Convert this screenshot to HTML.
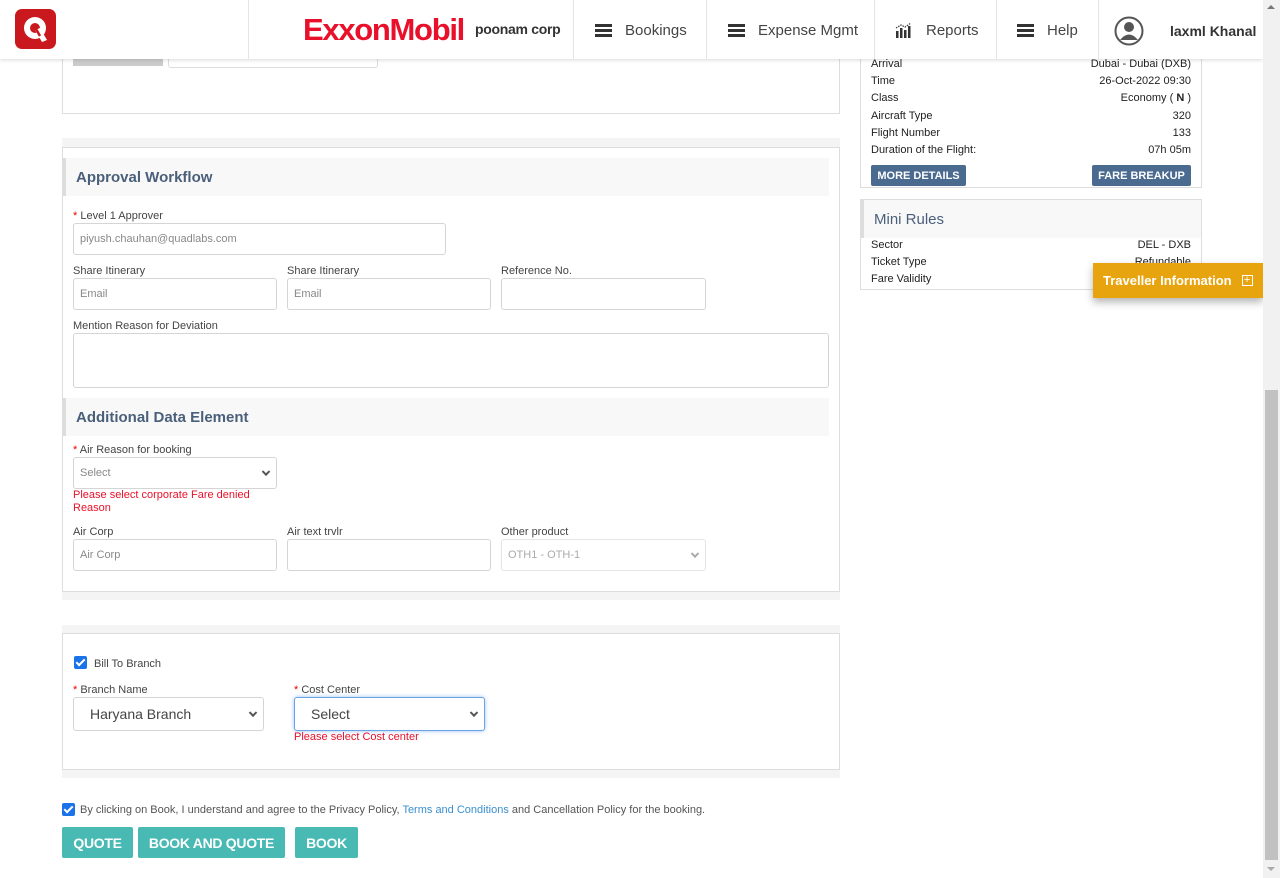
<!DOCTYPE html>
<html><head><meta charset="utf-8"><style>
*{box-sizing:border-box;margin:0;padding:0}
body{width:1280px;height:878px;overflow:hidden;background:#fff;font-family:"Liberation Sans",sans-serif;color:#333;position:relative}
.a{position:absolute}
.lbl{position:absolute;font-size:11px;color:#444}
.req{color:#e00}
.inp{position:absolute;border:1px solid #d5d5d5;border-radius:3px;background:#fff;font-size:11px;color:#888;padding-left:6px;display:flex;align-items:center}
.chev{position:absolute;right:7px;top:50%;width:6px;height:6px;border-right:2px solid #555;border-bottom:2px solid #555;transform:translateY(-70%) rotate(45deg)}
.sec{position:absolute;background:#f8f8f8;border-left:3px solid #ddd;font-size:15px;color:#4a5f7a;font-weight:bold;padding-left:10px;display:flex;align-items:center}
.err{position:absolute;font-size:11px;color:#e8102a;line-height:13px}
.band{position:absolute;left:62px;width:778px;background:#f4f4f4}
.card{position:absolute;left:62px;width:778px;border:1px solid #ddd;background:#fff}
.nav{position:absolute;top:0;height:59px;display:flex;align-items:center;font-size:15px;color:#444;border-left:1px solid #e5e5e5;padding-top:2px}
.ham{display:inline-block;width:17px;height:13px;margin-right:13px;background:linear-gradient(#333 0 3px,transparent 3px 5px,#333 5px 8px,transparent 8px 10px,#333 10px 13px)}
.btn{position:absolute;top:827px;height:31px;background:#48bab3;color:#fff;font-size:14px;font-weight:bold;display:flex;align-items:center;justify-content:center;border-radius:2px;letter-spacing:-0.3px}
.row{position:absolute;left:871px;width:320px;font-size:11px;color:#222;display:flex;justify-content:space-between}
.cb{position:absolute;width:13px;height:13px;background:#1a73e8;border-radius:2px}
.cb:after{content:"";position:absolute;left:4px;top:1px;width:3px;height:7px;border-right:2px solid #fff;border-bottom:2px solid #fff;transform:rotate(45deg)}
</style></head><body>

<div class="card" style="top:40px;height:74px"></div>
<div class="a" style="left:73px;top:55px;width:90px;height:11px;background:#ccc"></div>
<div class="a" style="left:168px;top:55px;width:210px;height:13px;border:1px solid #ddd;border-top:none;border-radius:0 0 3px 3px"></div>

<div class="band" style="top:138px;height:9px"></div>
<div class="card" style="top:147px;height:445px"></div>
<div class="sec" style="left:63px;top:158px;width:766px;height:38px">Approval Workflow</div>
<div class="lbl" style="left:73px;top:210px"><span class="req">* </span>Level 1 Approver</div>
<div class="inp" style="left:73px;top:223px;width:373px;height:32px">piyush.chauhan@quadlabs.com</div>
<div class="lbl" style="left:73px;top:265px">Share Itinerary</div>
<div class="lbl" style="left:287px;top:265px">Share Itinerary</div>
<div class="lbl" style="left:501px;top:265px">Reference No.</div>
<div class="inp" style="left:73px;top:278px;width:204px;height:32px">Email</div>
<div class="inp" style="left:287px;top:278px;width:204px;height:32px">Email</div>
<div class="inp" style="left:501px;top:278px;width:205px;height:32px"></div>
<div class="lbl" style="left:73px;top:320px">Mention Reason for Deviation</div>
<div class="inp" style="left:73px;top:333px;width:756px;height:55px"></div>

<div class="sec" style="left:63px;top:398px;width:766px;height:38px">Additional Data Element</div>
<div class="lbl" style="left:73px;top:444px"><span class="req">* </span>Air Reason for booking</div>
<div class="inp" style="left:73px;top:457px;width:204px;height:32px">Select<span class="chev"></span></div>
<div class="err" style="left:73px;top:489px">Please select corporate Fare denied<br>Reason</div>
<div class="lbl" style="left:73px;top:526px">Air Corp</div>
<div class="lbl" style="left:287px;top:526px">Air text trvlr</div>
<div class="lbl" style="left:501px;top:526px">Other product</div>
<div class="inp" style="left:73px;top:539px;width:204px;height:32px">Air Corp</div>
<div class="inp" style="left:287px;top:539px;width:204px;height:32px"></div>
<div class="inp" style="left:501px;top:539px;width:205px;height:32px;color:#aaa;border-color:#e5e5e5">OTH1 - OTH-1<span class="chev" style="border-color:#aaa"></span></div>
<div class="band" style="top:592px;height:8px"></div>

<div class="band" style="top:625px;height:8px"></div>
<div class="card" style="top:633px;height:137px"></div>
<div class="cb" style="left:74px;top:656px"></div>
<div class="lbl" style="left:94px;top:658px">Bill To Branch</div>
<div class="lbl" style="left:73px;top:684px"><span class="req">* </span>Branch Name</div>
<div class="lbl" style="left:294px;top:684px"><span class="req">* </span>Cost Center</div>
<div class="inp" style="left:73px;top:697px;width:191px;height:34px;font-size:14px;color:#444;padding-left:16px">Haryana Branch<span class="chev"></span></div>
<div class="inp" style="left:294px;top:697px;width:191px;height:34px;font-size:14px;color:#444;padding-left:16px;border-color:#6aa3e6;box-shadow:0 0 4px #9cc3f0">Select<span class="chev"></span></div>
<div class="err" style="left:294px;top:731px">Please select Cost center</div>
<div class="band" style="top:770px;height:8px"></div>

<div class="cb" style="left:62px;top:803px"></div>
<div class="lbl" style="left:80px;top:804px;color:#555">By clicking on Book, I understand and agree to the Privacy Policy, <span style="color:#3a8fd0">Terms and Conditions</span> and Cancellation Policy for the booking.</div>
<div class="btn" style="left:62px;width:71px">QUOTE</div>
<div class="btn" style="left:138px;width:147px">BOOK AND QUOTE</div>
<div class="btn" style="left:295px;width:63px">BOOK</div>

<div class="a" style="left:860px;top:40px;width:342px;height:148px;border:1px solid #ddd"></div>
<div class="row" style="top:58px"><span>Arrival</span><span>Dubai - Dubai (DXB)</span></div>
<div class="row" style="top:75px"><span>Time</span><span>26-Oct-2022 09:30</span></div>
<div class="row" style="top:92px"><span>Class</span><span>Economy ( <b>N</b> )</span></div>
<div class="row" style="top:110px"><span>Aircraft Type</span><span>320</span></div>
<div class="row" style="top:127px"><span>Flight Number</span><span>133</span></div>
<div class="row" style="top:144px"><span>Duration of the Flight:</span><span>07h 05m</span></div>
<div class="a" style="left:871px;top:165px;width:95px;height:21px;background:#4a6a90;color:#fff;font-size:11px;font-weight:bold;display:flex;align-items:center;justify-content:center;border-radius:2px">MORE DETAILS</div>
<div class="a" style="left:1092px;top:165px;width:99px;height:21px;background:#4a6a90;color:#fff;font-size:11px;font-weight:bold;display:flex;align-items:center;justify-content:center;border-radius:2px">FARE BREAKUP</div>
<div class="a" style="left:860px;top:199px;width:342px;height:91px;border:1px solid #ddd"></div>
<div class="sec" style="left:861px;top:200px;width:340px;height:38px;font-weight:normal;font-size:15px">Mini Rules</div>
<div class="row" style="top:239px"><span>Sector</span><span>DEL - DXB</span></div>
<div class="row" style="top:256px"><span>Ticket Type</span><span>Refundable</span></div>
<div class="row" style="top:273px"><span>Fare Validity</span><span></span></div>
<div class="a" style="left:1093px;top:263px;width:170px;height:35px;background:#e8a40f;color:#fff;font-size:13px;font-weight:bold;display:flex;align-items:center;padding-left:10px;box-shadow:0 4px 8px rgba(0,0,0,.3)">Traveller Information<span style="margin-left:10px;width:11px;height:11px;border:1.3px solid #fff;display:inline-flex;align-items:center;justify-content:center;font-size:11px;line-height:1;font-weight:normal">+</span></div>

<div class="a" style="left:0;top:0;width:1263px;height:59px;background:#fff;box-shadow:0 1px 4px rgba(0,0,0,.15)"></div>
<svg class="a" style="left:15px;top:9px" width="41" height="40" viewBox="0 0 41 40"><rect width="41" height="40" rx="7" fill="#c9191e"/><circle cx="20" cy="19" r="11" fill="#fff"/><circle cx="20" cy="19" r="5" fill="#c9191e"/><path d="M20 21 L27 33 L32 31 L25 19 Z" fill="#fff"/><path d="M21 20 L25 27" stroke="#c9191e" stroke-width="2.5"/></svg>
<div class="a" style="left:248px;top:0;width:1px;height:59px;background:#e5e5e5"></div>
<div class="a" style="left:303px;top:12px;font-size:31px;font-weight:bold;color:#e8102a;letter-spacing:-1.3px">ExxonMobil</div>
<div class="a" style="left:475px;top:21px;font-size:14px;color:#333;font-weight:bold;letter-spacing:-0.3px">poonam corp</div>
<div class="nav" style="left:573px;width:134px;padding-left:21px"><span class="ham"></span>Bookings</div>
<div class="nav" style="left:706px;width:169px;padding-left:21px"><span class="ham"></span>Expense Mgmt</div>
<div class="nav" style="left:874px;width:123px;padding-left:20px"><svg width="18" height="15" style="margin-right:13px" viewBox="0 0 18 15"><rect x="1" y="8" width="2.5" height="7" fill="#333"/><rect x="5" y="5" width="2.5" height="10" fill="#333"/><rect x="9" y="7" width="2.5" height="8" fill="#333"/><rect x="13" y="3" width="2.5" height="12" fill="#333"/><path d="M1 5 L6 2 L10 4 L16 0" stroke="#333" fill="none" stroke-width="1.2" stroke-dasharray="1.5 1"/></svg>Reports</div>
<div class="nav" style="left:996px;width:103px;padding-left:20px"><span class="ham"></span>Help</div>
<div class="nav" style="left:1098px;width:165px;padding-left:15px"><svg width="30" height="30" viewBox="0 0 30 30" style="margin-right:26px"><circle cx="15" cy="15" r="13.5" fill="none" stroke="#555" stroke-width="2"/><circle cx="15" cy="11" r="5" fill="#555"/><path d="M6 24 Q15 13 24 24" fill="#555"/></svg><b style="font-size:14px;color:#333">laxml Khanal</b></div>

<div class="a" style="left:1263px;top:0;width:17px;height:878px;background:#f1f1f1"></div>
<div class="a" style="left:1265px;top:390px;width:13px;height:470px;background:#c1c1c1"></div>
<div class="a" style="left:1267px;top:5px;width:0;height:0;border-left:4px solid transparent;border-right:4px solid transparent;border-bottom:4px solid #777"></div>
<div class="a" style="left:1267px;top:867px;width:0;height:0;border-left:4px solid transparent;border-right:4px solid transparent;border-top:4px solid #aaa"></div>
</body></html>
